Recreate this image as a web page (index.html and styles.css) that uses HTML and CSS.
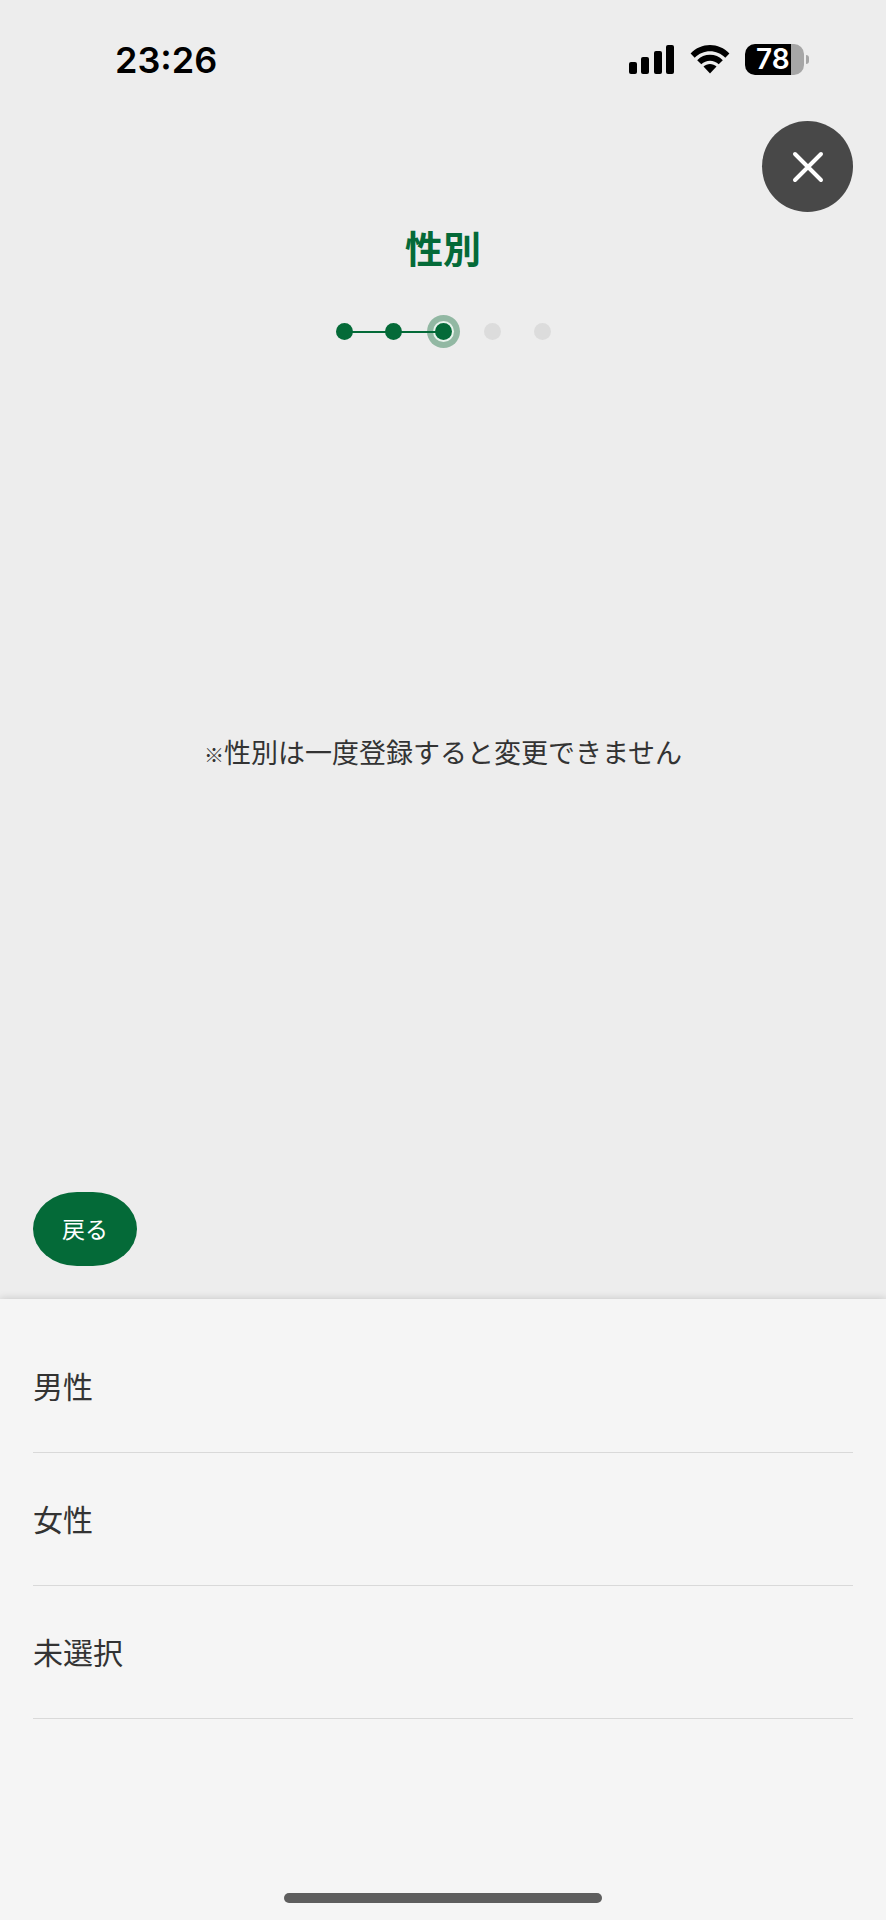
FILE: index.html
```
<!doctype html>
<html lang="ja">
    <head>
        <meta charset="UTF-8">
        <meta name="viewport" content="width=device-width, initial-scale=1">
        <title>性別</title>
        <link rel="stylesheet" href="styles.css">
    </head>
    <body>
        <div class="status-bar">
            <span class="time">23:26</span>
            <div class="status-icons">
                <svg class="signal" width="46" height="32" viewBox="0 0 46 32">
                    <rect x="0" y="18" width="8" height="12" rx="2"/>
                    <rect x="12" y="13" width="8" height="17" rx="2"/>
                    <rect x="25" y="7" width="8" height="23" rx="2"/>
                    <rect x="37" y="1" width="8" height="29" rx="2"/>
                </svg>
                <svg class="wifi" width="40" height="32" viewBox="0 0 40 32">
                    <path d="M0.6 9.6C11 -1.8 29 -1.8 39.4 9.6L35.3 13.8C27 5 13 5 4.7 13.8Z"/>
                    <path d="M7.2 16.2C14 9 26 9 32.8 16.2L28.7 20.3C24 15.4 16 15.4 11.3 20.3Z"/>
                    <path d="M13.5 22.6C17 19 23 19 26.5 22.6L20 29.6Z"/>
                </svg>
                <div class="battery">
                    <span class="battery-level">78</span>
                </div>
            </div>
        </div>
        <header class="header">
            <button class="close" type="button" aria-label="閉じる">
                <svg width="32" height="32" viewBox="0 0 32 32">
                    <path d="M3 3L29 29M29 3L3 29"/>
                </svg>
            </button>
            <h1 class="title">性別</h1>
            <ol class="steps">
                <li class="step done"></li>
                <li class="step done"></li>
                <li class="step current"></li>
                <li class="step"></li>
                <li class="step"></li>
            </ol>
        </header>
        <main class="main">
            <p class="note"><span class="mark">※</span>性別は一度登録すると変更できません</p>
        </main>
        <div class="actions">
            <button class="back" type="button">戻る</button>
        </div>
        <section class="sheet">
            <ul class="options">
                <li><button class="option" type="button">男性</button></li>
                <li><button class="option" type="button">女性</button></li>
                <li><button class="option" type="button">未選択</button></li>
            </ul>
            <div class="home-bar"></div>
        </section>
    </body>
</html>
```
FILE: styles.css
```
*{
    margin: 0;
    padding: 0;
    box-sizing: border-box;
}
body{
    display: flex;
    flex-direction: column;
    min-height: 100vh;
    background-color: #ededed;
    color: #333;
    font-family: "Noto Sans CJK JP", sans-serif;
}
ul, ol{
    list-style: none;
}
button{
    border: none;
    background: none;
    color: inherit;
    font-family: inherit;
    cursor: pointer;
}
/* status bar */
.status-bar{
    display: flex;
    justify-content: space-between;
    align-items: center;
    height: 121px;
    padding: 0 77px 2px 115px;
    color: #000;
    font-family: Inter, sans-serif;
}
.time{
    font-size: 36px;
    font-weight: 600;
}
.status-icons{
    display: flex;
    align-items: center;
    gap: 15px;
}
.battery{
    position: relative;
    width: 59px;
    height: 31px;
    margin-right: 5px;
    border-radius: 10px;
    background: linear-gradient(to right, #000 46px, #a6a6a6 46px);
}
.battery::after{
    content: "";
    position: absolute;
    left: 61px;
    top: 11px;
    width: 3px;
    height: 9px;
    border-radius: 0 4px 4px 0;
    background-color: #a6a6a6;
}
.battery-level{
    display: block;
    padding-left: 11px;
    color: #fff;
    font-size: 28px;
    font-weight: 600;
    line-height: 31px;
}
/* header */
.header{
    display: flex;
    flex-direction: column;
    align-items: center;
}
.close{
    display: flex;
    align-items: center;
    justify-content: center;
    align-self: flex-end;
    width: 91px;
    height: 91px;
    margin-right: 33px;
    border-radius: 50%;
    background-color: #484848;
}
.close path{
    stroke: #fff;
    stroke-width: 4;
    stroke-linecap: round;
}
.title{
    margin-top: 10px;
    color: #046a38;
    font-size: 38px;
    font-weight: 700;
    line-height: 50px;
}
.steps{
    display: flex;
    justify-content: space-between;
    width: 215px;
    margin-top: 51px;
}
.step{
    position: relative;
    width: 17px;
    height: 17px;
    border-radius: 50%;
    background-color: #dcdcdc;
}
.done, .current{
    background-color: #046a38;
}
.current{
    box-shadow: 0 0 0 2px #e8f3ec, 0 0 0 8px #92b8a3;
}
/* line to the next dot, drawn over the ring */
.done::after{
    content: "";
    position: absolute;
    z-index: 1;
    left: 16px;
    top: 8px;
    width: 35px;
    height: 2px;
    background-color: #046a38;
}
/* main */
.main{
    flex: 1;
    display: flex;
    justify-content: center;
    padding-top: 392px;
}
.note{
    font-size: 27px;
    line-height: 40px;
}
.mark{
    font-size: 20px;
    font-weight: 700;
}
.actions{
    padding: 0 33px 33px;
}
.back{
    display: block;
    width: 104px;
    height: 74px;
    padding-bottom: 3px;
    border-radius: 44px / 37px;
    background-color: #046a38;
    color: #fff;
    font-size: 23px;
}
/* bottom sheet */
.sheet{
    padding: 21px 33px 17px;
    background-color: #f5f5f5;
    box-shadow: 0 0 8px rgba(0,0,0,0.18);
}
.options li{
    border-bottom: 1px solid #d9d9d9;
}
.option{
    display: block;
    width: 100%;
    height: 132px;
    padding-bottom: 3px;
    font-size: 30px;
    text-align: left;
}
.home-bar{
    width: 318px;
    height: 10px;
    margin: 174px auto 0;
    border-radius: 5px;
    background-color: #5e5e5e;
}
```
